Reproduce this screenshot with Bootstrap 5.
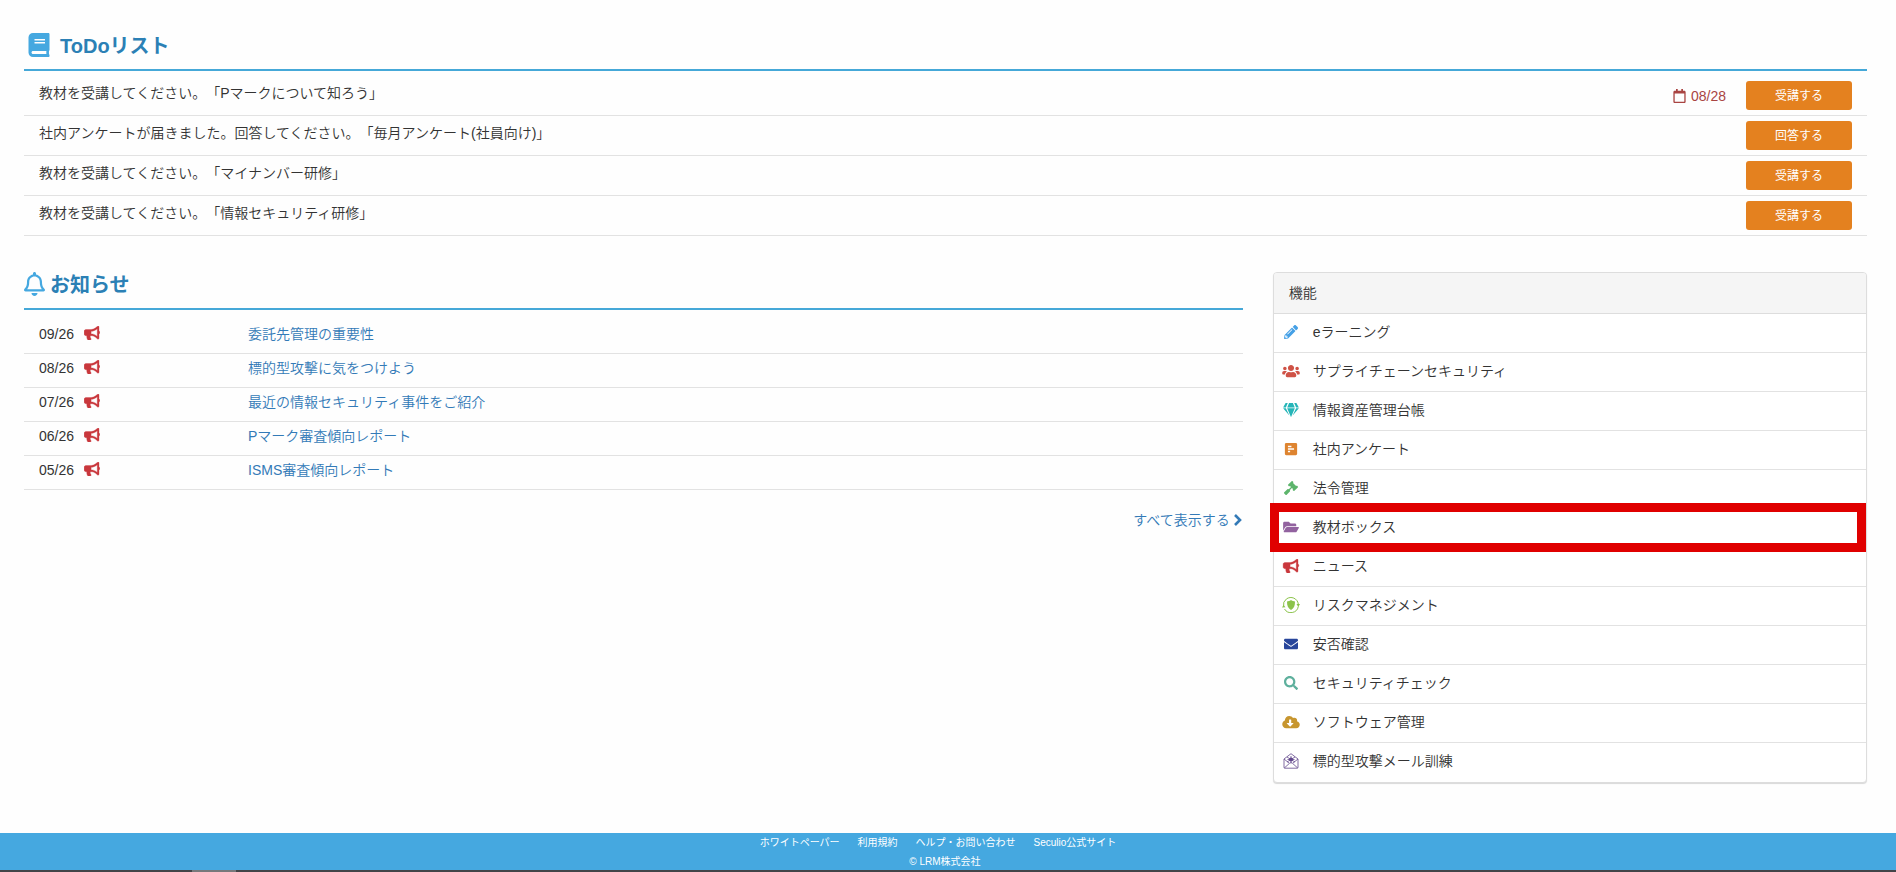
<!DOCTYPE html>
<html lang="ja">
<head>
<meta charset="utf-8">
<meta name="viewport" content="width=device-width, initial-scale=1">
<title>Seculio</title>
<link href="https://cdn.jsdelivr.net/npm/bootstrap@5.3.0/dist/css/bootstrap.min.css" rel="stylesheet">
<style>
  body { font-family: "Liberation Sans", "Noto Sans CJK JP", sans-serif; font-size: 14px; font-weight: 350; line-height: 20px; color: #333; background: #fefefe; text-spacing-trim: space-all; }
  a { color: #337ab7; text-decoration: none; }
  a:hover { text-decoration: underline; }
  svg { display: block; fill: currentColor; }
  .page-body { padding: 24px 29px 0 24px; }
  .section-title { font-size: 20px; line-height: 24px; font-weight: 700; color: #2b80b5; border-bottom: 2px solid #45a8d8; margin: 0; }
  .section-title svg { color: #45a8e0; margin-bottom: 2px; }
  .todo-title { padding: 9px 0 10px 3px; gap: 9px; }
  .news-title { padding-bottom: 10px; gap: 5px; }
  .todo-list { padding-top: 5px; }
  .todo-list li { height: 40px; padding: 0 15px; border-bottom: 1px solid #e2e2e2; }
  .todo-text { padding-bottom: 6px; }
  .due-date { color: #a94442; margin-right: 20px; gap: 5px; }
  .btn-todo { width: 106px; height: 29px; padding: 0; font-size: 12px; border: 0; border-radius: 3px; color: #fff; background: #e4811f; }
  .btn-todo:hover { color: #fff; background: #c96f16; }
  .main-columns { --bs-gutter-x: 30px; margin-top: 36px; }
  .news-table { margin: 9px 0 0; width: 100%; }
  .news-table td { height: 34px; padding: 0 0 4px; border-bottom: 1px solid #e2e2e2; vertical-align: middle; }
  .news-table td:first-child { width: 224px; padding-left: 15px; }
  .news-date { gap: 10px; }
  .news-date svg { color: #c9373c; margin-bottom: 2px; }
  .show-all { margin-top: 20px; gap: 4px; }
  .feature-panel { border: 1px solid #ddd; border-radius: 4px; box-shadow: 0 1px 1px rgba(0,0,0,.15); background: #fff; }
  .feature-head { font-size: 14px; font-weight: 350; line-height: 20px; margin: 0; padding: 10px 15px; background: #f5f5f5; border-bottom: 1px solid #ddd; border-radius: 3px 3px 0 0; }
  .feature-list a { height: 39px; padding: 0 8px 3px; color: #333; gap: 13px; border-bottom: 1px solid #e2e2e2; }
  .feature-list li:last-child a { border-bottom: 0; }
  .feature-list svg { width: 18px; height: 14px; }
  .feature-list .icon-tall { height: 16px; }
  .highlighted { position: relative; }
  .highlighted::after { content: ""; position: absolute; inset: -6px 0 -4px -4px; border: 9px solid #e00000; pointer-events: none; }
  .page-footer { margin-top: 50px; color: #fff; background: #45a8e0; font-size: 10px; font-weight: 400; line-height: 19px; }
  .page-footer a { color: #fff; }
  .footer-links { padding-right: 20px; gap: 18px; }
  .footer-copy { padding-right: 6px; height: 18px; }
  .footer-edge { height: 2px; background: linear-gradient(to right, #424448 192px, #77797c 192px, #77797c 236px, #424448 236px); }
</style>
</head>
<body>
<svg class="d-none" aria-hidden="true">
  <symbol id="i-horn" viewBox="0 0 576 512"><path stroke="currentColor" stroke-width="12" d="M576 240c0-23.630-12.950-44.040-32-55.120V32.010C544 23.260 537.020 0 512 0c-7.120 0-14.190 2.380-19.980 7.020l-85.030 68.030C364.280 109.190 310.660 128 256 128H64c-35.350 0-64 28.650-64 64v96c0 35.350 28.650 64 64 64h33.700c-1.390 10.480-2.180 21.140-2.180 32 0 39.770 9.260 77.350 25.560 110.940 5.190 10.690 16.520 17.060 28.400 17.060h74.280c26.050 0 41.690-29.840 25.900-50.560-16.400-21.520-26.150-48.360-26.150-77.440 0-11.110 1.620-21.790 4.410-32H256c54.660 0 108.280 18.810 150.980 52.950l85.030 68.030a32.023 32.023 0 0 0 19.980 7.020c24.920 0 32-22.780 32-32V295.130C563.050 284.040 576 263.630 576 240zm-96 141.420l-33.050-26.440C392.950 311.780 325.120 288 256 288v-96c69.120 0 136.950-23.780 190.950-66.980L480 98.580v282.840z"/></symbol>
</svg>

<main class="page-body">
  <section>
    <h2 class="section-title todo-title d-flex align-items-center">
      <svg width="24" height="24" viewBox="0 0 448 512"><path d="M448 360V24c0-13.300-10.700-24-24-24H96C43 0 0 43 0 96v320c0 53 43 96 96 96h328c13.300 0 24-10.700 24-24v-16c0-7.500-3.500-14.300-8.900-18.700-4.200-15.400-4.200-59.300 0-74.700 5.400-4.300 8.900-11.100 8.900-18.600zM128 134c0-3.300 2.700-6 6-6h212c3.300 0 6 2.700 6 6v20c0 3.300-2.700 6-6 6H134c-3.300 0-6-2.700-6-6v-20zm0 64c0-3.300 2.700-6 6-6h212c3.300 0 6 2.700 6 6v20c0 3.300-2.700 6-6 6H134c-3.300 0-6-2.700-6-6v-20zm253.400 250H96c-17.700 0-32-14.300-32-32 0-17.600 14.400-32 32-32h285.400c-1.900 17.100-1.900 46.900 0 64z"/></svg>
      ToDoリスト
    </h2>
    <ul class="todo-list list-unstyled mb-0">
      <li class="d-flex align-items-center">
        <span class="todo-text flex-grow-1">教材を受講してください。「Pマークについて知ろう」</span>
        <span class="due-date d-flex align-items-center">
          <svg width="13" height="14" viewBox="0 0 448 512"><path d="M400 64h-48V12c0-6.600-5.400-12-12-12h-40c-6.600 0-12 5.400-12 12v52H160V12c0-6.600-5.400-12-12-12h-40c-6.600 0-12 5.400-12 12v52H48C21.500 64 0 85.500 0 112v352c0 26.500 21.500 48 48 48h352c26.500 0 48-21.500 48-48V112c0-26.500-21.500-48-48-48zm-6 400H54c-3.300 0-6-2.700-6-6V160h352v298c0 3.300-2.700 6-6 6z"/></svg>
          08/28</span>
        <button type="button" class="btn btn-todo">受講する</button>
      </li>
      <li class="d-flex align-items-center">
        <span class="todo-text flex-grow-1">社内アンケートが届きました。回答してください。「毎月アンケート(社員向け)」</span>
        <button type="button" class="btn btn-todo">回答する</button>
      </li>
      <li class="d-flex align-items-center">
        <span class="todo-text flex-grow-1">教材を受講してください。「マイナンバー研修」</span>
        <button type="button" class="btn btn-todo">受講する</button>
      </li>
      <li class="d-flex align-items-center">
        <span class="todo-text flex-grow-1">教材を受講してください。「情報セキュリティ研修」</span>
        <button type="button" class="btn btn-todo">受講する</button>
      </li>
    </ul>
  </section>

  <div class="row main-columns">
    <section class="col-8">
      <h2 class="section-title news-title d-flex align-items-center">
        <svg width="21" height="24" viewBox="0 0 448 512"><path d="M439.390 362.290c-19.320-20.760-55.470-51.990-55.470-154.290 0-77.700-54.480-139.900-127.940-155.160V32c0-17.670-14.320-32-31.980-32s-31.980 14.330-31.980 32v20.840C118.560 68.100 64.080 130.300 64.080 208c0 102.300-36.150 133.530-55.470 154.290-6 6.450-8.660 14.160-8.610 21.710.11 16.400 12.980 32 32.100 32h383.800c19.120 0 32-15.600 32.100-32 .05-7.550-2.610-15.270-8.610-21.710zM67.530 368c21.220-27.970 44.420-74.330 44.530-159.420 0-.2-.06-.38-.06-.58 0-61.860 50.140-112 112-112s112 50.140 112 112c0 .2-.06.38-.06.58.11 85.100 23.310 131.460 44.530 159.420H67.530zM224 512c35.320 0 63.970-28.650 63.970-64H160.030c0 35.350 28.650 64 63.970 64z"/></svg>
        お知らせ
      </h2>
      <table class="news-table">
        <tbody>
          <tr><td><div class="news-date d-flex align-items-center">09/26 <svg width="16" height="14"><use href="#i-horn"/></svg></div></td><td><a href="#">委託先管理の重要性</a></td></tr>
          <tr><td><div class="news-date d-flex align-items-center">08/26 <svg width="16" height="14"><use href="#i-horn"/></svg></div></td><td><a href="#">標的型攻撃に気をつけよう</a></td></tr>
          <tr><td><div class="news-date d-flex align-items-center">07/26 <svg width="16" height="14"><use href="#i-horn"/></svg></div></td><td><a href="#">最近の情報セキュリティ事件をご紹介</a></td></tr>
          <tr><td><div class="news-date d-flex align-items-center">06/26 <svg width="16" height="14"><use href="#i-horn"/></svg></div></td><td><a href="#">Pマーク審査傾向レポート</a></td></tr>
          <tr><td><div class="news-date d-flex align-items-center">05/26 <svg width="16" height="14"><use href="#i-horn"/></svg></div></td><td><a href="#">ISMS審査傾向レポート</a></td></tr>
        </tbody>
      </table>
      <div class="d-flex justify-content-end">
        <a href="#" class="show-all d-flex align-items-center">すべて表示する
          <svg width="9" height="14" viewBox="0 0 9 14"><path d="M1 2l5 5-5 5" fill="none" stroke="currentColor" stroke-width="2.600"/></svg></a>
      </div>
    </section>

    <aside class="col-4">
      <div class="feature-panel">
        <h3 class="feature-head">機能</h3>
        <ul class="feature-list list-unstyled mb-0">
          <li><a href="#" class="d-flex align-items-center"><svg viewBox="0 0 512 512" color="#45a0e6"><path d="M497.900 142.100l-46.100 46.100c-4.700 4.700-12.300 4.700-17 0l-111-111c-4.700-4.700-4.700-12.300 0-17l46.100-46.100c18.700-18.700 49.100-18.700 67.900 0l60.100 60.100c18.800 18.700 18.800 49.100 0 67.900zM284.200 99.800L21.600 362.400.4 483.900c-2.900 16.400 11.400 30.600 27.800 27.800l121.500-21.300 262.600-262.600c4.700-4.700 4.700-12.300 0-17l-111-111c-4.800-4.700-12.400-4.700-17.100 0zM124.100 339.900c-5.500-5.500-5.500-14.300 0-19.800l154-154c5.500-5.500 14.300-5.500 19.800 0s5.500 14.300 0 19.800l-154 154c-5.500 5.500-14.300 5.500-19.800 0zM88 424h48v36.300l-64.500 11.300-31.100-31.100L51.700 376H88v48z"/></svg>eラーニング</a></li>
          <li><a href="#" class="d-flex align-items-center"><svg viewBox="0 0 640 512" color="#cf5246"><path d="M96 224c35.300 0 64-28.700 64-64s-28.700-64-64-64-64 28.700-64 64 28.700 64 64 64zm448 0c35.300 0 64-28.700 64-64s-28.700-64-64-64-64 28.700-64 64 28.700 64 64 64zm32 32h-64c-17.600 0-33.500 7.100-45.100 18.600 40.300 22.100 68.900 62 75.100 109.400h66c17.700 0 32-14.300 32-32v-32c0-35.300-28.700-64-64-64zm-256 0c61.900 0 112-50.100 112-112S381.900 32 320 32 208 82.100 208 144s50.100 112 112 112zm76.800 32h-8.300c-20.800 10-43.900 16-68.500 16s-47.600-6-68.500-16h-8.300C179.600 288 128 339.600 128 403.200V432c0 26.500 21.500 48 48 48h288c26.500 0 48-21.500 48-48v-28.800c0-63.600-51.600-115.200-115.200-115.200zm-223.700-13.400C161.500 263.100 145.600 256 128 256H64c-35.300 0-64 28.700-64 64v32c0 17.700 14.300 32 32 32h65.900c6.300-47.400 34.900-87.300 75.200-109.400z"/></svg>サプライチェーンセキュリティ</a></li>
          <li><a href="#" class="d-flex align-items-center"><svg viewBox="0 0 576 512" color="#25b5b8"><path d="M485.500 0L576 160H474.900L405.700 0h79.800zm-128 0l69.200 160H149.300L218.500 0h139zm-267 0h79.800l-69.200 160H0L90.500 0zM0 192h100.700l123 251.700c1.500 3.100-2.700 5.900-5 3.300L0 192zm148.200 0h279.600l-137 318.200c-1 2.400-4.500 2.400-5.500 0L148.200 192zm204.100 251.700l123-251.700H576L357.300 446.900c-2.300 2.700-6.500-.1-5-3.200z"/></svg>情報資産管理台帳</a></li>
          <li><a href="#" class="d-flex align-items-center"><svg viewBox="0 0 448 512" color="#de8430"><path d="M400 32H48C21.500 32 0 53.500 0 80v352c0 26.500 21.500 48 48 48h352c26.500 0 48-21.500 48-48V80c0-26.500-21.500-48-48-48zM112 136h128v56H112zm0 92h224v56H112zm0 92h80v56h-80z" fill-rule="evenodd"/></svg>社内アンケート</a></li>
          <li><a href="#" class="d-flex align-items-center"><svg viewBox="0 0 512 512" color="#5db56c"><path d="M504.970 199.360l-22.630-22.630c-9.370-9.370-24.570-9.370-33.940 0l-5.660 5.660-113.130-113.130 5.660-5.660c9.370-9.370 9.370-24.570 0-33.940L312.640 7.030c-9.370-9.370-24.570-9.370-33.940 0L154.240 131.490c-9.370 9.370-9.370 24.570 0 33.940l22.630 22.630c9.370 9.370 24.570 9.370 33.940 0l5.660-5.660 39.600 39.600-81.040 81.040-5.660-5.660c-12.500-12.500-32.760-12.500-45.250 0L9.370 412.120c-12.500 12.500-12.500 32.760 0 45.250l45.250 45.250c12.500 12.500 32.760 12.500 45.250 0l114.740-114.740c12.500-12.500 12.500-32.760 0-45.250l-5.660-5.660 81.040-81.040 39.600 39.600-5.660 5.660c-9.370 9.370-9.370 24.570 0 33.940l22.630 22.630c9.370 9.370 24.570 9.370 33.940 0l124.460-124.460c9.380-9.370 9.380-24.570.01-33.940z"/></svg>法令管理</a></li>
          <li class="highlighted"><a href="#" class="d-flex align-items-center"><svg viewBox="0 0 576 512" color="#92629f"><path d="M572.700 292.100L500.300 416.200A64 64 0 0 1 445 448H45c-18.500 0-30.100-20.100-20.700-36.100l72.400-124.200A64 64 0 0 1 152 256h400c18.500 0 30 20.100 20.700 36.100zM152 224h328v-48c0-26.500-21.500-48-48-48H272l-64-64H48C21.500 64 0 85.500 0 112v278l69.100-118.400A96.200 96.200 0 0 1 152 224z"/></svg>教材ボックス</a></li>
          <li><a href="#" class="d-flex align-items-center"><svg color="#c9373c"><use href="#i-horn"/></svg>ニュース</a></li>
          <li><a href="#" class="d-flex align-items-center"><svg class="icon-tall" viewBox="0 0 18 16" color="#8bc34a"><path d="M9 3c1.500 1 2.600 1.400 4 1.500 0 4.300-1 6.700-4 8.500-3-1.800-4-4.200-4-8.500C6.400 4.400 7.500 4 9 3z"/><path d="M4.500 1.900A7.500 7.500 0 0 1 16.300 7M16.300 9.500A7.500 7.500 0 0 1 2.500 12M1.600 9.500A7.500 7.500 0 0 1 4.500 1.900" fill="none" stroke="currentColor"/><path d="M14.500 7h3.500L16.300 10zM0 10.500L1.500 8l2 2.300z"/></svg>リスクマネジメント</a></li>
          <li><a href="#" class="d-flex align-items-center"><svg viewBox="0 0 512 512" color="#27459b"><path d="M502.300 190.800c3.900-3.100 9.700-.2 9.700 4.700V400c0 26.500-21.500 48-48 48H48c-26.500 0-48-21.500-48-48V195.600c0-5 5.700-7.800 9.700-4.700 22.400 17.400 52.100 39.500 154.100 113.600 21.100 15.400 56.700 47.800 92.200 47.600 35.700.3 72-32.800 92.300-47.600 102-74.100 131.600-96.300 154-113.700zM256 320c23.200.4 56.600-29.200 73.400-41.400 132.700-96.300 142.800-104.700 173.400-128.700 5.800-4.500 9.200-11.500 9.200-18.900v-19c0-26.500-21.500-48-48-48H48C21.500 64 0 85.500 0 112v19c0 7.400 3.400 14.300 9.200 18.900 30.600 23.900 40.700 32.400 173.400 128.700 16.800 12.200 50.200 41.800 73.400 41.400z"/></svg>安否確認</a></li>
          <li><a href="#" class="d-flex align-items-center"><svg viewBox="0 0 512 512" color="#5eb09d"><path d="M505 442.700L405.300 343c-4.500-4.500-10.600-7-17-7H372c27.600-35.300 44-79.700 44-128C416 93.100 322.900 0 208 0S0 93.100 0 208s93.100 208 208 208c48.300 0 92.700-16.400 128-44v16.300c0 6.400 2.500 12.500 7 17l99.700 99.700c9.400 9.400 24.600 9.400 33.900 0l28.300-28.300c9.400-9.400 9.400-24.600.1-34zM208 336c-70.700 0-128-57.200-128-128 0-70.700 57.200-128 128-128 70.700 0 128 57.200 128 128 0 70.700-57.200 128-128 128z"/></svg>セキュリティチェック</a></li>
          <li><a href="#" class="d-flex align-items-center"><svg viewBox="0 0 640 512" color="#c7962f"><path d="M537.600 226.600c4.100-10.700 6.400-22.400 6.400-34.600 0-53-43-96-96-96-19.700 0-38.100 6-53.300 16.200C367 64.200 315.300 32 256 32c-88.400 0-160 71.600-160 160 0 2.700.1 5.400.2 8.100C40.200 219.800 0 273.200 0 336c0 79.500 64.500 144 144 144h368c70.700 0 128-57.300 128-128 0-61.900-44-113.600-102.400-125.400zm-132.900 88.700L299.300 420.700c-6.200 6.200-16.400 6.200-22.600 0L171.300 315.300c-10.100-10.100-2.900-27.300 11.300-27.300H248V176c0-8.800 7.200-16 16-16h48c8.800 0 16 7.200 16 16v112h65.400c14.200 0 21.400 17.200 11.300 27.300z"/></svg>ソフトウェア管理</a></li>
          <li><a href="#" class="d-flex align-items-center"><svg class="icon-tall" viewBox="0 0 18 16" color="#62488c"><path d="M2 6l7-5.300L16 6v8.200c0 .700-.300 1-1 1H3c-.700 0-1-.300-1-1zM2 6l5 4M16 6l-5 4M2.300 15L7.500 10.300Q9 9 10.500 10.300L15.700 15M5 4l8 5M13 4L5 9M9 3v7M5.500 6.500h7" fill="none" stroke="currentColor" stroke-width=".8"/><circle cx="9" cy="6.500" r="2"/></svg>標的型攻撃メール訓練</a></li>
        </ul>
      </div>
    </aside>
  </div>
</main>

<footer class="page-footer text-center">
  <nav class="footer-links d-flex justify-content-center" aria-label="フッター">
    <a href="#">ホワイトペーパー</a>
    <a href="#">利用規約</a>
    <a href="#">ヘルプ・お問い合わせ</a>
    <a href="#">Seculio公式サイト</a>
  </nav>
  <div class="footer-copy">© LRM株式会社</div>
  <div class="footer-edge"></div>
</footer>
<script src="https://cdn.jsdelivr.net/npm/bootstrap@5.3.0/dist/js/bootstrap.bundle.min.js"></script>
</body>
</html>
